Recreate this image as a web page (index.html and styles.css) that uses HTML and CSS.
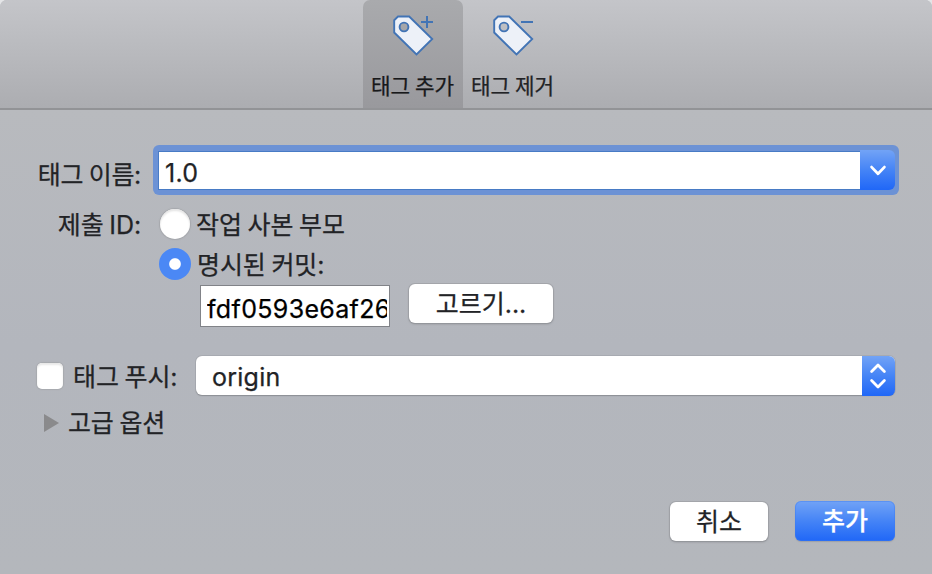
FILE: index.html
```
<!DOCTYPE html>
<html lang="ko">
<head>
<meta charset="utf-8">
<title>태그 추가</title>
<link rel="stylesheet" href="styles.css">
</head>
<body>
<div class="window">
  <header class="toolbar">
    <div class="tab tab-active">
      <svg class="tag-icon" viewBox="0 0 42 42" width="42" height="42">
        <path class="tag-shape" fill-rule="evenodd" d="M1.2 6.2 5 2.5H16.2L39.2 25 23.5 40.5 1.2 18.5ZM11 8.6a4.4 4.4 0 1 0 0 8.8a4.4 4.4 0 1 0 0-8.8Z"/>
        <path class="tag-sign" d="M28 8H40M34 2V14"/>
      </svg>
      <span class="tab-label">태그 추가</span>
    </div>
    <div class="tab">
      <svg class="tag-icon" viewBox="0 0 42 42" width="42" height="42">
        <path class="tag-shape" fill-rule="evenodd" d="M1.2 6.2 5 2.5H16.2L39.2 25 23.5 40.5 1.2 18.5ZM11 8.6a4.4 4.4 0 1 0 0 8.8a4.4 4.4 0 1 0 0-8.8Z"/>
        <path class="tag-sign" d="M28 8H40"/>
      </svg>
      <span class="tab-label">태그 제거</span>
    </div>
  </header>
  <main class="form">
    <div class="row row-name">
      <span class="label label-name">태그 이름:</span>
      <div class="combo">
        <div class="combo-text">1.0</div>
        <div class="combo-button">
          <svg width="18" height="12" viewBox="0 0 18 12"><path class="chevron" d="M2.6 3.1 9 9.7 15.4 3.1"/></svg>
        </div>
      </div>
    </div>
    <div class="row row-parent">
      <span class="label">제출 ID:</span>
      <span class="radio"></span>
      <span class="option">작업 사본 부모</span>
    </div>
    <div class="row row-commit">
      <span class="radio radio-on"></span>
      <span class="option">명시된 커밋:</span>
    </div>
    <div class="row row-hash">
      <div class="hash"><div class="hash-text">fdf0593e6af26</div></div>
      <div class="button button-pick">고르기...</div>
    </div>
    <div class="row row-push">
      <span class="checkbox"></span>
      <span class="push-label">태그 푸시:</span>
      <div class="select">
        <div class="select-text">origin</div>
        <div class="select-button">
          <svg width="18" height="28" viewBox="0 0 18 28"><path class="chevron" d="M2.6 9.4 9 3 15.4 9.4M2.6 18.6 9 25 15.4 18.6"/></svg>
        </div>
      </div>
    </div>
    <div class="row row-advanced">
      <span class="triangle"></span>
      <span>고급 옵션</span>
    </div>
    <div class="row row-actions">
      <div class="button button-cancel">취소</div>
      <div class="button button-add">추가</div>
    </div>
  </main>
</div>
</body>
</html>
```
FILE: styles.css
```
* { box-sizing: border-box; }
html { background: #e4e5e7; }
body {
  margin: 0;
  font: 25px/36px Inter, "Noto Sans CJK KR", sans-serif;
  color: #222326;
  white-space: nowrap;
  word-spacing: -1.2px;
  -webkit-text-stroke: 0.25px currentColor;
}
.window {
  width: 932px;
  height: 574px;
  overflow: hidden;
  border-radius: 7px 7px 0 0;
  background: linear-gradient(#b8babe 110px, #b3b6bd 60%, #b4b7bc);
}
.toolbar {
  height: 110px;
  display: flex;
  padding-left: 363px;
  background: linear-gradient(#c4c5c9, #acadb1);
  border-bottom: 2px solid #929396;
}
.tab {
  width: 100px;
  height: 108px;
  padding-top: 14px;
  display: flex;
  flex-direction: column;
  align-items: center;
}
.tab-active {
  background: linear-gradient(#a9aaad, #99999d);
  border-radius: 7px 7px 0 0;
  color: #18191b;
}
.tag-icon { display: block; margin-left: 1px; }
.tag-shape { fill: #edf1f8; stroke: #4274b5; stroke-width: 1.9; }
.tag-sign { fill: none; stroke: #4274b5; stroke-width: 2; }
.tab-label { font-size: 21.3px; line-height: 30px; margin: 15px 1px 0 0; }
.form { padding: 35px 34px 0 37px; }
.row { display: flex; align-items: center; }
.row-name { height: 50px; }
.label { width: 104px; flex: none; text-align: right; letter-spacing: -0.1px; }
.label-name { padding-top: 10px; letter-spacing: -0.3px; }
.combo {
  width: 746px;
  height: 50px;
  margin-left: 12px;
  padding: 5px 4px 5px 6px;
  flex: none;
  display: flex;
  align-items: center;
  border-radius: 6px;
  background: #6c92d5;
}
.combo-text {
  flex: 1;
  height: 37px;
  padding-left: 6px;
  line-height: 43px;
  letter-spacing: 0.3px;
  background: #fff;
  box-shadow: 0 0 0 1px #487bc5;
}
.combo-button, .select-button {
  height: 40px;
  display: flex;
  align-items: center;
  justify-content: center;
  background: linear-gradient(#72a3f6, #4584f6 50%, #2067f7);
  border-radius: 0 6px 6px 0;
}
.combo-button { width: 35px; position: relative; }
.chevron { fill: none; stroke: #fff; stroke-width: 2.8; stroke-linecap: round; stroke-linejoin: round; }
.row-parent { height: 40px; margin-top: 9px; }
.row-parent .label, .option { padding-top: 2px; }
.radio {
  width: 30px;
  height: 30px;
  margin-left: 19px;
  border-radius: 50%;
  flex: none;
  background: #fff;
  box-shadow: inset 0 2px 2px #e5e5e5, 0 0 1px 1px #96989c80;
}
.option { margin-left: 6px; letter-spacing: -0.1px; }
.row-commit { height: 40px; padding-left: 122px; }
.radio-on {
  width: 32px;
  height: 32px;
  margin-left: 0;
  background: radial-gradient(circle, #fff 5.3px, #4b88f5 6.3px);
  box-shadow: none;
}
.row-hash { margin-left: 163px; height: 44px; align-items: flex-start; margin-top: -1px; }
.hash {
  width: 190px;
  height: 42px;
  margin-top: 2px;
  padding: 0 2px 0 6px;
  border: 1px solid #818388;
  background: #fff;
  color: #000;
}
.hash-text { overflow: hidden; line-height: 46px; height: 40px; letter-spacing: 0.35px; }
.button {
  height: 39px;
  line-height: 40px;
  border-radius: 6px;
  background: #fff;
  text-align: center;
  box-shadow: 0 0 0 1px #96989c80, 0 1px 2px #5e606680;
}
.button-pick { width: 144px; margin: 1px 0 0 19px; }
.row-push { height: 40px; margin-top: 28px; }
.checkbox {
  width: 26px;
  height: 26px;
  margin-top: 2px;
  border-radius: 5px;
  flex: none;
  background: #fff;
  box-shadow: inset 0 2px 2px #e8e8e8, 0 0 1px 1px #96989c66;
}
.push-label { width: 106px; margin-left: 10px; padding-top: 4px; letter-spacing: -0.1px; }
.select {
  width: 699px;
  height: 39px;
  margin: 1px 0 0 17px;
  display: flex;
  flex: none;
  border-radius: 6px;
  background: #fff;
  box-shadow: 0 0 0 1px #96989c60, 0 1px 1px #5e606680;
}
.select-text { flex: 1; padding-left: 16px; line-height: 43px; letter-spacing: 0.25px; }
.select-button { width: 33px; padding-right: 1px; }
.row-advanced { height: 40px; margin-top: 8px; padding-left: 7px; letter-spacing: -0.15px; }
.triangle {
  width: 15px;
  height: 18px;
  margin-right: 9px;
  background: #8a8a8c;
  clip-path: polygon(0 0, 100% 50%, 0 100%);
}
.row-actions { margin-top: 58px; justify-content: flex-end; padding-right: 3px; height: 40px; }
.button-cancel { width: 98px; margin-right: 27px; }
.button-add {
  width: 100px;
  height: 40px;
  color: #fff;
  font-weight: 500;
  background: linear-gradient(#72a3f6, #4584f6 50%, #2067f7);
  box-shadow: inset 0 0 0 1px #3c7af066, 0 1px 1px #5e606640;
}
```
